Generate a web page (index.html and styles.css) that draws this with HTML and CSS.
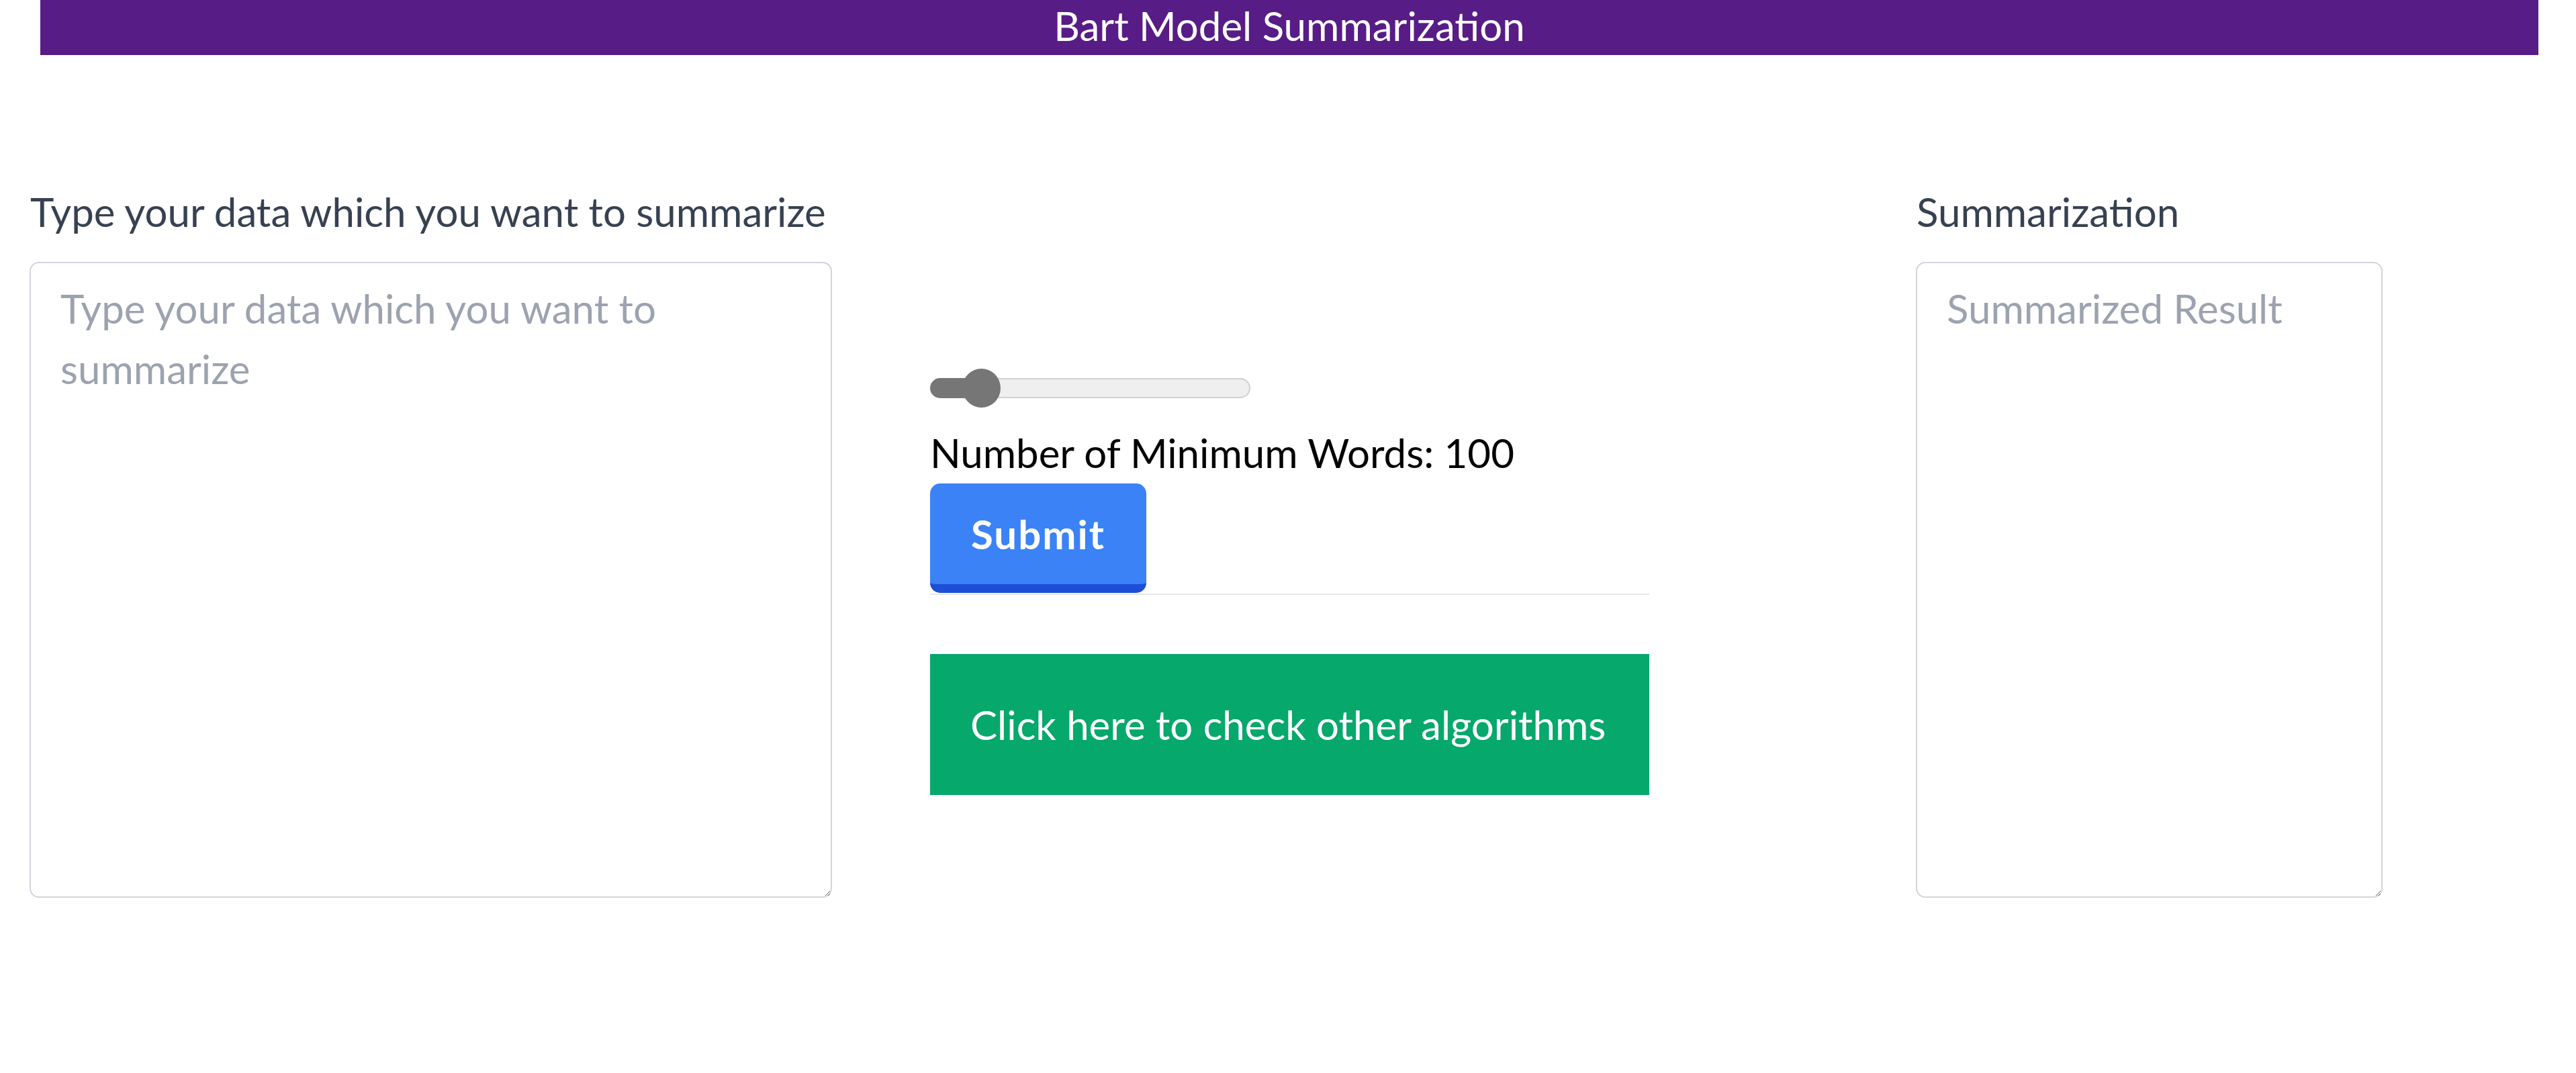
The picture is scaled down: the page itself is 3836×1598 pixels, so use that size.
FILE: index.html
```html
<!DOCTYPE html>
<html lang="en">
<head>
<meta charset="utf-8">
<title>Bart Model Summarization</title>
<link rel="stylesheet" href="styles.css">
</head>
<body>
<header class="topbar">Bart Model Summarization</header>
<main class="layout">
  <section class="col col-input">
    <label class="field-label" for="source">Type your data which you want to summarize</label>
    <textarea id="source" class="box box-input" placeholder="Type your data which you want to summarize"></textarea>
  </section>
  <section class="col col-controls">
    <input class="range" type="range" min="50" max="500" value="100">
    <div class="range-value">Number of Minimum Words: 100</div>
    <button class="submit" type="button">Submit</button>
    <hr class="divider">
    <a class="other-link" href="#">Click here to check other algorithms</a>
  </section>
  <section class="col col-output">
    <label class="field-label" for="result">Summarization</label>
    <textarea id="result" class="box box-output" placeholder="Summarized Result"></textarea>
  </section>
</main>
</body>
</html>
```
FILE: styles.css
```css
html, body {
  margin: 0;
  padding: 0;
  background: #ffffff;
}

body {
  font-family: "Lato", "Open Sans", sans-serif;
  font-size: 60px;
  line-height: 90px;
  color: #000000;
}

.topbar {
  display: block;
  height: 82px;
  line-height: 76px;
  margin: 0 56px 0 60px;
  background: #581c87;
  color: #ffffff;
  text-align: center;
  font-size: 60px;
}

.layout {
  display: flex;
  align-items: flex-start;
  margin-top: 188px;
  padding-left: 44px;
}

.col {
  display: flex;
  flex-direction: column;
}

.col-input {
  width: 1195px;
}

.col-controls {
  width: 1071px;
  margin-left: 146px;
  padding-top: 278px;
}

.col-output {
  width: 695px;
  margin-left: 397px;
}

.field-label {
  display: block;
  color: #374151;
  line-height: 90px;
  margin-bottom: 30px;
  padding-left: 1px;
}

.box {
  box-sizing: border-box;
  display: block;
  width: 100%;
  height: 947px;
  margin: 0;
  padding: 22px 44px;
  border: 2px solid #d1d5db;
  border-radius: 14px;
  font-family: "Lato", "Open Sans", sans-serif;
  font-size: 60px;
  line-height: 90px;
  color: #111827;
  background: #ffffff;
  resize: both;
  outline: none;
}

.box::placeholder {
  color: #9ca3af;
  opacity: 1;
}

.range {
  -webkit-appearance: none;
  appearance: none;
  width: 477px;
  height: 59px;
  margin: 0;
  padding: 0;
  background: transparent;
}

.range::-webkit-slider-runnable-track {
  box-sizing: border-box;
  height: 30px;
  border-radius: 15px;
  border: 2px solid transparent;
  background:
    linear-gradient(to right, #767676 0, #767676 75px, transparent 75px) border-box,
    linear-gradient(#efefef, #efefef) padding-box,
    linear-gradient(#d0d0d0, #d0d0d0) border-box;
}

.range::-webkit-slider-thumb {
  -webkit-appearance: none;
  appearance: none;
  width: 57px;
  height: 58px;
  margin-top: -16px;
  border: none;
  border-radius: 50%;
  background: #767676;
}

.range-value {
  margin-top: 22px;
  line-height: 90px;
  color: #000000;
}

.submit {
  box-sizing: border-box;
  width: 322px;
  margin: 1px 0 0 0;
  padding: 30px 0 30px 0;
  border: none;
  border-bottom: 13px solid #1d4ed8;
  border-radius: 15px;
  background: #3b82f6;
  color: #ffffff;
  font-family: "Lato", "Open Sans", sans-serif;
  font-size: 60px;
  font-weight: 700;
  letter-spacing: 2px;
  line-height: 90px;
  text-align: center;
  cursor: pointer;
}

.divider {
  width: 100%;
  margin: 1px 0 0 0;
  border: none;
  border-top: 2px solid #e5e7eb;
  height: 0;
}

.other-link {
  display: block;
  margin-top: 88px;
  padding: 60px 0 60px 60px;
  background: #06a86c;
  color: #ffffff;
  text-decoration: none;
  line-height: 90px;
}
```
